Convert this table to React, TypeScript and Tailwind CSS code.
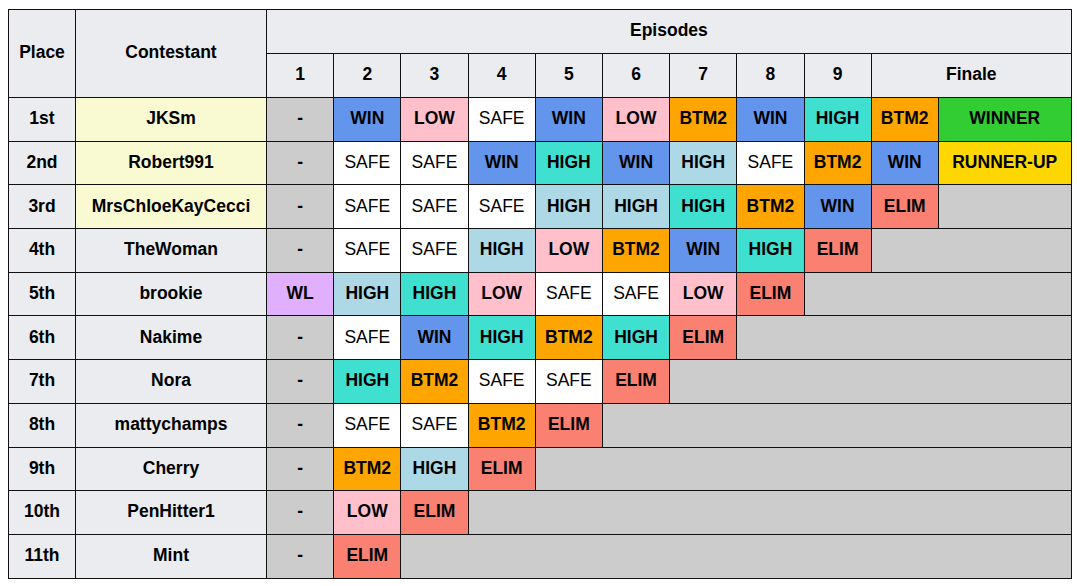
type Cell = { t: string; c: string; span?: number }

const bg: Record<string, string> = {
  win: "bg-[#6495ed] font-bold",
  low: "bg-[#ffc0cb] font-bold",
  safe: "bg-white font-normal",
  high: "bg-[#40e0d0] font-bold",
  lhigh: "bg-[#add8e6] font-bold",
  btm: "bg-[#ffa500] font-bold",
  elim: "bg-[#fa8072] font-bold",
  winner: "bg-[#32cd32] font-bold",
  runner: "bg-[#ffd700] font-bold",
  wl: "bg-[#e0b0ff] font-bold",
  none: "bg-[#cccccc] font-bold",
}

const W = (): Cell => ({ t: "WIN", c: "win" })
const L = (): Cell => ({ t: "LOW", c: "low" })
const S = (): Cell => ({ t: "SAFE", c: "safe" })
const H = (): Cell => ({ t: "HIGH", c: "high" })
const LH = (): Cell => ({ t: "HIGH", c: "lhigh" })
const B = (): Cell => ({ t: "BTM2", c: "btm" })
const E = (): Cell => ({ t: "ELIM", c: "elim" })
const D = (): Cell => ({ t: "-", c: "none" })
const X = (span: number): Cell => ({ t: "", c: "none", span })

interface Row {
  place: string
  name: string
  top?: boolean
  cells: Cell[]
}

const rows: Row[] = [
  { place: "1st", name: "JKSm", top: true, cells: [D(), W(), L(), S(), W(), L(), B(), W(), H(), B(), { t: "WINNER", c: "winner" }] },
  { place: "2nd", name: "Robert991", top: true, cells: [D(), S(), S(), W(), H(), W(), LH(), S(), B(), W(), { t: "RUNNER-UP", c: "runner" }] },
  { place: "3rd", name: "MrsChloeKayCecci", top: true, cells: [D(), S(), S(), S(), LH(), LH(), H(), B(), W(), E(), X(1)] },
  { place: "4th", name: "TheWoman", cells: [D(), S(), S(), LH(), L(), B(), W(), H(), E(), X(2)] },
  { place: "5th", name: "brookie", cells: [{ t: "WL", c: "wl" }, LH(), H(), L(), S(), S(), L(), E(), X(3)] },
  { place: "6th", name: "Nakime", cells: [D(), S(), W(), H(), B(), H(), E(), X(4)] },
  { place: "7th", name: "Nora", cells: [D(), H(), B(), S(), S(), E(), X(5)] },
  { place: "8th", name: "mattychamps", cells: [D(), S(), S(), B(), E(), X(6)] },
  { place: "9th", name: "Cherry", cells: [D(), B(), LH(), E(), X(7)] },
  { place: "10th", name: "PenHitter1", cells: [D(), L(), E(), X(8)] },
  { place: "11th", name: "Mint", cells: [D(), E(), X(9)] },
]

const th = "border border-[#111] bg-[#eaecf0] font-bold pt-0 pb-[2px]"
const td = "border border-[#111] pt-0 pb-[2px]"

export default function App() {
  return (
    <div className="bg-white min-h-[586px] pl-2 pt-[9px] font-['Liberation_Sans',Arial,sans-serif] text-[17.5px] text-black">
      <table className="table-fixed border-collapse text-center w-[1063px]">
        <colgroup>
          <col className="w-[67px]" />
          <col className="w-[191px]" />
          {Array.from({ length: 9 }).map((_, i) => (
            <col key={i} className="w-[67.2px]" />
          ))}
          <col className="w-[67px]" />
          <col className="w-[133px]" />
        </colgroup>
        <thead>
          <tr className="h-[44px]">
            <th rowSpan={2} className={th}>Place</th>
            <th rowSpan={2} className={th}>Contestant</th>
            <th colSpan={11} className={th}>Episodes</th>
          </tr>
          <tr className="h-[44px]">
            {["1", "2", "3", "4", "5", "6", "7", "8", "9"].map((n) => (
              <th key={n} className={th}>{n}</th>
            ))}
            <th colSpan={2} className={th}>Finale</th>
          </tr>
        </thead>
        <tbody>
          {rows.map((r) => (
            <tr key={r.place} className="h-[43.7px]">
              <td className={`${td} bg-[#eaecf0] font-bold`}>{r.place}</td>
              <td className={`${td} font-bold ${r.top ? "bg-[#fafad2]" : "bg-[#eaecf0]"}`}>{r.name}</td>
              {r.cells.map((c, i) => (
                <td key={i} colSpan={c.span} className={`${td} ${bg[c.c]}`}>
                  {c.t}
                </td>
              ))}
            </tr>
          ))}
        </tbody>
      </table>
    </div>
  )
}
